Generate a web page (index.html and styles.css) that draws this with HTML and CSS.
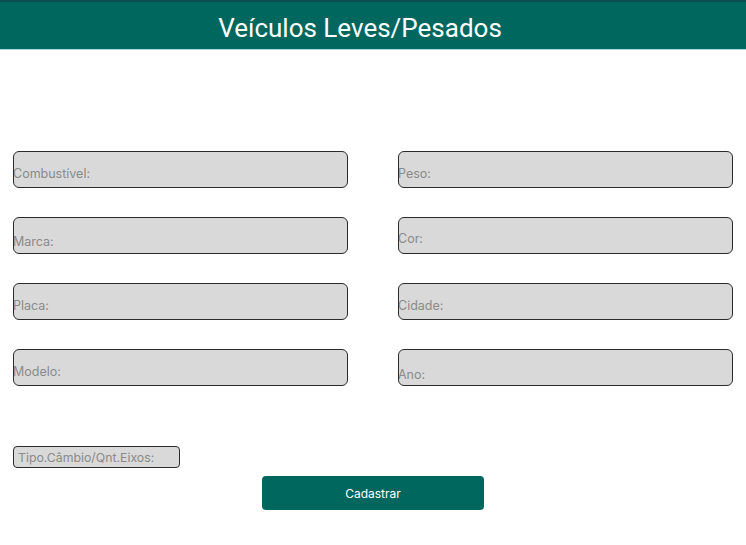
FILE: index.html
```html
<!DOCTYPE html>
<html lang="pt">
<head>
<meta charset="utf-8">
<title>Veículos Leves/Pesados</title>
<link rel="stylesheet" href="styles.css">
</head>
<body>
<header class="topbar">
  <h1 class="title">Veículos Leves/Pesados</h1>
</header>
<main class="form">
  <div class="grid">
    <input class="field" type="text" placeholder="Combustível:">
    <input class="field" type="text" placeholder="Peso:">
    <input class="field field-low" type="text" placeholder="Marca:">
    <input class="field field-high" type="text" placeholder="Cor:">
    <input class="field" type="text" placeholder="Placa:">
    <input class="field" type="text" placeholder="Cidade:">
    <input class="field" type="text" placeholder="Modelo:">
    <input class="field field-lower" type="text" placeholder="Ano:">
  </div>
  <input class="small-field" type="text" placeholder="Tipo.Câmbio/Qnt.Eixos:">
  <div class="actions">
    <button class="btn" type="button">Cadastrar</button>
  </div>
</main>
</body>
</html>
```
FILE: styles.css
```css
* { box-sizing: border-box; }
html, body { margin: 0; padding: 0; background: #ffffff; }
body { font-family: Inter, "Noto Sans", sans-serif; }

.topbar {
  height: 50px;
  background: #00675f;
  border-top: 2px solid #0d4d50;
  border-bottom: 1px solid #a8dcd8;
  display: flex;
  align-items: center;
  justify-content: center;
}
.title {
  margin: 0;
  color: #ffffff;
  font-family: Roboto, Inter, sans-serif;
  font-weight: 400;
  font-size: 26px;
  line-height: 1;
  padding-top: 4px;
  padding-right: 26px;
}

.form {
  padding: 101px 13px 0 13px;
}
.grid {
  display: grid;
  grid-template-columns: 335px 335px;
  column-gap: 50px;
  row-gap: 29px;
}
.field {
  height: 37px;
  width: 335px;
  background: #d9d9d9;
  border: 1px solid #2b2b2b;
  border-radius: 6px;
  padding: 8px 0 0 0;
  text-indent: -1px;
  font-family: Inter, sans-serif;
  font-size: 12.5px;
  color: #555;
  outline: none;
}
.field-low { padding-top: 11px; }
.field-lower { padding-top: 13px; }
.field-high { padding-top: 5px; }
.field::placeholder, .small-field::placeholder { color: #8a8a8a; opacity: 1; }

.small-field {
  display: block;
  margin-top: 60px;
  width: 167px;
  height: 22px;
  background: #d9d9d9;
  border: 1px solid #2b2b2b;
  border-radius: 4px;
  padding: 0 0 0 4px;
  font-family: Inter, sans-serif;
  font-size: 12.3px;
  outline: none;
}

.actions {
  display: flex;
  justify-content: center;
  margin-top: 8px;
  margin-right: -13px;
  margin-left: -13px;
}
.btn {
  width: 222px;
  height: 34px;
  background: #00675f;
  color: #ffffff;
  border: none;
  border-radius: 4px;
  font-family: Inter, sans-serif;
  font-size: 12px;
}
```
